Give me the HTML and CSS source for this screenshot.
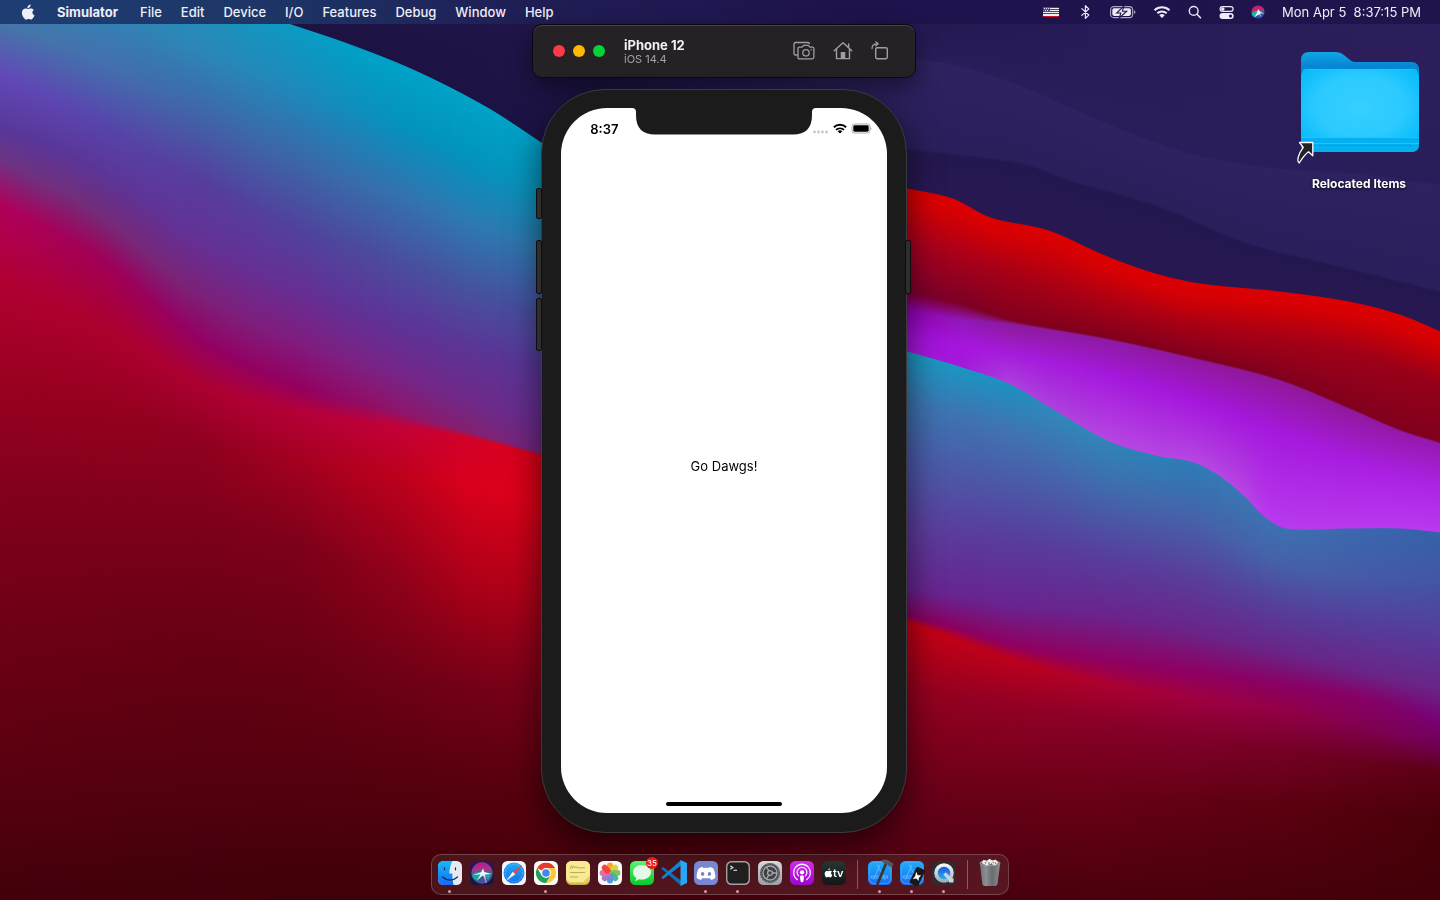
FILE: index.html
```html
<!DOCTYPE html>
<html lang="en">
<head>
<meta charset="utf-8">
<title>Simulator – iPhone 12</title>
<link rel="stylesheet" href="styles.css">
</head>
<body>
<canvas class="wallpaper" id="wallpaper" width="1440" height="900" aria-hidden="true"></canvas>

<header class="menubar">
  <nav class="menus" aria-label="Application menu">
    <button class="menu apple" aria-label="Apple menu">
      <svg width="14" height="17" viewBox="0 0 14 17"><path fill="#eef0f5" d="M9.6 0.4c.1 1-.3 2-.9 2.700-.6.8-1.500 1.300-2.300 1.200-.1-1 .3-1.900.9-2.600C7.900.9 8.900.4 9.600.4zM12.900 6.100c-.9.5-1.500 1.300-1.500 2.500 0 1.400.9 2.300 2.100 2.700-.3 1-.8 1.900-1.400 2.700-.6.8-1.200 1.600-2.200 1.600-.9 0-1.200-.5-2.300-.5s-1.500.5-2.300.6c-1 0-1.700-.9-2.300-1.700C1.300 12 .4 9.400 1.200 7c.5-1.600 1.900-2.600 3.300-2.600 1 0 1.900.6 2.600.6.600 0 1.700-.7 2.900-.6 1.200 0 2.200.6 2.900 1.700z"/></svg>
    </button>
    <button class="menu app-name">Simulator</button>
    <button class="menu">File</button>
    <button class="menu">Edit</button>
    <button class="menu">Device</button>
    <button class="menu">I/O</button>
    <button class="menu">Features</button>
    <button class="menu">Debug</button>
    <button class="menu">Window</button>
    <button class="menu">Help</button>
  </nav>
  <div class="status">
    <button class="menu" aria-label="Input source: U.S.">
      <svg width="18" height="16" viewBox="0 0 18 16"><path fill="#f4f1f5" d="M0 3h16v10H0z"/><path fill="#cf1024" d="M0 3h16v1H0zM0 5h16v1H0zM0 7h16v1H0zM0 9h16v1H0zM0 11h16v1H0zM0 12h16v1H0z"/><path fill="#f4f1f5" d="M0 11h16v1H0z"/><path fill="#4a4fa2" d="M0 3h7v5H0z"/><path fill="#dfe2f6" d="M1 4h1v1H1zM3 4h1v1H3zM5 4h1v1H5zM2 6h1v1H2zM4 6h1v1H4z"/></svg>
    </button>
    <button class="menu" aria-label="Bluetooth">
      <svg width="15" height="16" viewBox="0 0 15 16"><path fill="none" stroke="#e9e7f2" stroke-width="1.200" stroke-linejoin="round" stroke-linecap="round" d="M3.800 4.600l7 6.400-3.400 3.400V1.600l3.400 3.400-7 6.400"/></svg>
    </button>
    <button class="menu" aria-label="Battery, charging">
      <svg width="26" height="16" viewBox="0 0 26 16"><rect x=".6" y="2.600" width="22" height="11" rx="3.200" fill="none" stroke="#aaa5c4" stroke-width="1.100"/><rect x="2.300" y="4.300" width="18.600" height="7.600" rx="1.800" fill="#eceaf4"/><path fill="#aaa5c4" d="M23.900 6.200c1 .3 1.500 1 1.500 1.900s-.5 1.600-1.500 1.900z"/><path fill="#eceaf4" stroke="#22154f" stroke-width="1.100" d="M13.800 2.200L6.700 9h4.100l-1.500 5L16.700 7.200h-4.200z"/></svg>
    </button>
    <button class="menu" aria-label="Wi-Fi">
      <svg width="18" height="16" viewBox="0 0 18 16"><g fill="none" stroke="#eceaf4" stroke-width="2"><path d="M1.500 6.200a11 11 0 0 1 15 0M4.300 9.200a7 7 0 0 1 9.400 0"/></g><path fill="#eceaf4" d="M9 14l-2.700-2.700a4 4 0 0 1 5.400 0z"/></svg>
    </button>
    <button class="menu" aria-label="Search">
      <svg width="14" height="16" viewBox="0 0 14 16"><circle cx="5.700" cy="6.900" r="4.400" fill="none" stroke="#e9e7f2" stroke-width="1.400"/><path stroke="#e9e7f2" stroke-width="1.600" stroke-linecap="round" d="M9 10.300l3.500 3.500"/></svg>
    </button>
    <button class="menu" aria-label="Control Center">
      <svg width="15" height="16" viewBox="0 0 15 16"><rect x="1.100" y="2.600" width="13" height="4.800" rx="2.400" fill="none" stroke="#eceaf4" stroke-width="1.200"/><circle cx="3.800" cy="5" r="1.800" fill="#eceaf4"/><rect x=".5" y="9" width="14.200" height="6" rx="3" fill="#eceaf4"/><circle cx="11.500" cy="12" r="1.600" fill="#22154f"/></svg>
    </button>
    <button class="menu" aria-label="Siri">
      <svg width="14" height="16" viewBox="0 0 14 16"><defs><linearGradient id="siri-bar" x1="0" y1="0" x2=".2" y2="1"><stop offset="0" stop-color="#a2206e"/><stop offset=".4" stop-color="#d0246e"/><stop offset=".6" stop-color="#2b6c9c"/><stop offset="1" stop-color="#3244a8"/></linearGradient></defs><circle cx="7" cy="8" r="6.600" fill="url(#siri-bar)"/><path fill="#18b9a9" d="M.6 9.500C2.500 7.500 4.500 7 6.500 7L4 13.500C2 12.700.8 11.300.6 9.500z"/><path fill="#f4f6fb" d="M7 5.200l3 3 3.200 1-4.200.3 1 4-1.800-3.200-4.500 2.600L6 8.600z"/></svg>
    </button>
    <time class="clock">Mon Apr 5&nbsp; 8:37:15 PM</time>
  </div>
</header>

<a class="desktop-item" href="#">
  <svg width="128" height="124" viewBox="0 0 128 124">
    <defs>
      <linearGradient id="fold-back" x1="0" y1="0" x2="0" y2="1"><stop offset="0" stop-color="#12a6e4"/><stop offset=".2" stop-color="#0687d4"/></linearGradient>
      <radialGradient id="fold-front" cx=".5" cy=".45" r=".62"><stop offset="0" stop-color="#36cfff"/><stop offset=".6" stop-color="#2bcaff"/><stop offset="1" stop-color="#08bcfa"/></radialGradient>
    </defs>
    <path fill="url(#fold-back)" d="M6 14q0-8 8-8h26c6 0 9 3 12 5.500C55 14 57 16 61 16h55q8 0 8 8v50H6z"/>
    <path fill="url(#fold-front)" d="M6 31q0-8 8-8h102q8 0 8 8v67q0 8-8 8H14q-8 0-8-8z"/>
    <path fill="#04b0f0" d="M6 91h118v7q0 8-8 8H14q-8 0-8-8z"/>
    <path stroke="#2cc0f6" stroke-width="1" fill="none" d="M6 91.500h118M6 97.500h118M8 24.500q2-1 6-1h102q4 0 6 1"/>
    <path stroke="#049fe0" stroke-width="1" d="M6 99.500h118"/>
    <path fill="#222326" stroke="#fff" stroke-width="1.300" stroke-linejoin="round" d="M4.500 96.500h13.300v13.300l-4.300-4c-4 3-6 6-9.300 11.200-1.400-1-1.700-3-.9-6 .8-3.500 2.500-6.500 5-9.700z"/>
  </svg>
  <span class="desktop-label">Relocated Items</span>
</a>

<main class="stage">
  <section class="sim-bar" aria-label="Simulator window">
    <div class="lights">
      <button class="light close" aria-label="Close"></button>
      <button class="light minimise" aria-label="Minimise"></button>
      <button class="light zoom" aria-label="Zoom"></button>
    </div>
    <div class="sim-title">
      <h1 class="sim-name">iPhone 12</h1>
      <p class="sim-os">iOS 14.4</p>
    </div>
    <div class="sim-tools">
      <button class="tool" aria-label="Screenshot">
        <svg width="22" height="20" viewBox="0 0 22 20"><g fill="none" stroke="#a19da0" stroke-width="1.300" stroke-linejoin="round"><path d="M4.500 14H2.600Q1 14 1 12.400V3.100Q1 1.500 2.600 1.500h12.300q1.600 0 1.600 1.600"/><path d="M6.500 6.200h2.600l1.500-1.900h4.800l1.500 1.900h2.500q1.500 0 1.500 1.500v8.600q0 1.500-1.500 1.500H6.500Q5 17.800 5 16.300V7.700q0-1.500 1.500-1.500z"/><circle cx="13" cy="11.800" r="3.200"/></g><circle cx="18.300" cy="8.700" r=".8" fill="#a19da0"/></svg>
      </button>
      <button class="tool" aria-label="Home">
        <svg width="20" height="20" viewBox="0 0 20 20"><path fill="none" stroke="#a19da0" stroke-width="1.400" stroke-linejoin="round" stroke-linecap="round" d="M1.200 9.700L10 1.800l8.800 7.900M3.500 8v9.600h13V8M15.600 6V3"/><path fill="#a19da0" d="M7.700 11h4.600v6.600H7.700z"/></svg>
      </button>
      <button class="tool" aria-label="Rotate">
        <svg width="18" height="20" viewBox="0 0 18 20"><rect x="4.700" y="6.700" width="11.600" height="11" rx="1.400" fill="none" stroke="#a19da0" stroke-width="1.400"/><path fill="none" stroke="#a19da0" stroke-width="1.300" stroke-linecap="round" stroke-linejoin="round" d="M1 7.500c0-3 1.600-4.700 5.400-4.700M4.800.9l2.400 1.900-2.400 2"/></svg>
      </button>
    </div>
  </section>

  <section class="phone" aria-label="iPhone 12">
    <span class="key mute"></span>
    <span class="key vol-up"></span>
    <span class="key vol-down"></span>
    <span class="key power"></span>
    <div class="screen">
      <svg class="notch" width="184" height="27" viewBox="0 0 184 27" aria-hidden="true"><path fill="#1b1b1b" d="M0 0h184q-4 0-4 4v3q0 19.500-19 19.500H23Q4 26.500 4 7V4q0-4-4-4z"/></svg>
      <div class="ios-status">
        <time class="ios-time">8:37</time>
        <svg width="60" height="12" viewBox="0 0 60 12" aria-hidden="true"><g fill="#c6c6c8"><circle cx="3.500" cy="9" r="1.400"/><circle cx="7.500" cy="9" r="1.400"/><circle cx="11.500" cy="9" r="1.400"/><circle cx="15.500" cy="9" r="1.400"/></g><g fill="none" stroke="#000" stroke-width="1.900"><path d="M22.800 4.300a9 9 0 0 1 12.400 0M25 6.900a6 6 0 0 1 8 0"/></g><path d="M29 10.600l-2.300-2.300a3.400 3.400 0 0 1 4.600 0z"/><rect x="41" y="1" width="18" height="9" rx="2.600" fill="none" stroke="#aaa"/><rect x="42.300" y="2.300" width="15.400" height="6.400" rx="1.400"/><path fill="#aaa" d="M59.500 4q1 .5 1 1.500t-1 1.500z"/></svg>
      </div>
      <p class="greeting">Go Dawgs!</p>
      <div class="home-bar"></div>
    </div>
  </section>
</main>

<footer class="dock-row">
  <nav class="dock" aria-label="Dock">
    <button class="app running" aria-label="Finder"><svg class="icon" viewBox="0 0 28 28"><defs><linearGradient id="fi" x1="0" y1="0" x2="0" y2="1"><stop offset="0" stop-color="#10bcfc"/><stop offset="1" stop-color="#1c68f4"/></linearGradient></defs><rect x="2" y="2" width="24" height="24" rx="5.500" fill="#e6e9f0"/><path fill="url(#fi)" d="M7.500 2h9c-2 3.500-3 8-3.200 12.500h3c0 4 .3 8 1.400 11.500H7.500A5.500 5.500 0 0 1 2 20.500v-13A5.500 5.500 0 0 1 7.500 2z"/><path fill="none" stroke="#1c2a48" stroke-width="1.200" stroke-linecap="round" d="M8.500 8.800v2M19.500 8.800v2M6.500 18c4.500 4.200 10.500 4.200 15 0"/></svg></button>
    <button class="app" aria-label="Siri"><svg class="icon" viewBox="0 0 28 28"><defs><linearGradient id="si" x1="0" y1="0" x2="0" y2="1"><stop offset="0" stop-color="#3c0f55"/><stop offset="1" stop-color="#0c1c3e"/></linearGradient><linearGradient id="so" x1=".4" y1="0" x2=".5" y2="1"><stop offset="0" stop-color="#c4148c"/><stop offset=".35" stop-color="#a43a8c"/><stop offset=".6" stop-color="#246a86"/><stop offset="1" stop-color="#4a4aa8"/></linearGradient></defs><rect x="2" y="2" width="24" height="24" rx="5.500" fill="url(#si)"/><circle cx="14" cy="14" r="10.400" fill="url(#so)" stroke="#5f5f94" stroke-width=".6"/><path fill="#16a4a5" d="M4 16c3-3 6-3 10-3l-4.500 9C6.500 21 4.500 19 4 16z"/><path fill="#2aa0b4" d="M15 14l8 2-3 5z"/><path fill="#e8fbff" d="M15 9.500l1.300 3.500L24 15l-7.200.4 1.700 8-3.500-7.200-6 5.300 3.600-6.300L5 16l8-2.800z"/><path fill="#f06ab0" d="M15.500 16l3.500 7.500-1.500.5z"/></svg></button>
    <button class="app" aria-label="Safari"><svg class="icon" viewBox="0 0 28 28"><defs><linearGradient id="sf" x1="0" y1="0" x2="0" y2="1"><stop offset="0" stop-color="#1fa8f6"/><stop offset="1" stop-color="#1a72ec"/></linearGradient></defs><rect x="2" y="2" width="24" height="24" rx="5.500" fill="#f5f6f8"/><circle cx="14" cy="14" r="10.500" fill="url(#sf)"/><circle cx="14" cy="14" r="8.800" fill="none" stroke="#bfe2fb" stroke-width=".7" stroke-dasharray=".5 1"/><path fill="#f24338" d="M22 6l-9.200 6.700 2.500 2.500z"/><path fill="#f6f6f8" d="M6 22l6.800-9.300 2.500 2.500z"/></svg></button>
    <button class="app running" aria-label="Chrome"><svg class="icon" viewBox="0 0 28 28"><rect x="2" y="2" width="24" height="24" rx="5.500" fill="#fbfbfb"/><path fill="#e33b2e" d="M14 14L5.200 9A10 10 0 0 1 22.800 9z"/><path fill="#e33b2e" d="M14 4a10 10 0 0 1 8.700 5.100H14z"/><path fill="#fcc934" d="M22.700 9.100A10 10 0 0 1 14 24l4.300-7.500L14 9.100z"/><path fill="#1fa15a" d="M5.300 9A10 10 0 0 0 14 24l4.300-7.500H9.700z"/><circle cx="14" cy="14" r="4.900" fill="#fff"/><circle cx="14" cy="14" r="3.800" fill="#4684f0"/></svg></button>
    <button class="app" aria-label="Stickies"><svg class="icon" viewBox="0 0 28 28"><rect x="2" y="3" width="24" height="23" rx="5.500" fill="#c9ad46"/><rect x="2" y="2" width="24" height="22.500" rx="5.500" fill="#e3cf66"/><path fill="#f7ea91" d="M7.500 2h13A5.500 5.500 0 0 1 26 7.500v9l-7 6.500H7.500A5.500 5.500 0 0 1 2 17.500v-10A5.500 5.500 0 0 1 7.500 2z"/><path fill="none" stroke="#b5a555" stroke-width=".9" d="M6 10c1-5 2.500-4 2.300-.5 1-3 2-3 2.700-.5.500-2 1.500-2 2 .2 1-1.500 2 .3 3-.4h5M6 13.500h15M6 18h8"/></svg></button>
    <button class="app" aria-label="Photos"><svg class="icon" viewBox="0 0 28 28"><rect x="2" y="2" width="24" height="24" rx="5.500" fill="#fafafa"/><g opacity=".9"><rect x="11" y="3.600" width="6" height="10" rx="3" fill="#f79a1e"/><rect x="11" y="3.600" width="6" height="10" rx="3" fill="#d3d32c" transform="rotate(45 14 14)"/><rect x="11" y="3.600" width="6" height="10" rx="3" fill="#71bf47" transform="rotate(90 14 14)"/><rect x="11" y="3.600" width="6" height="10" rx="3" fill="#35b08d" transform="rotate(135 14 14)"/><rect x="11" y="3.600" width="6" height="10" rx="3" fill="#4b87dc" transform="rotate(180 14 14)"/><rect x="11" y="3.600" width="6" height="10" rx="3" fill="#9a6cc4" transform="rotate(225 14 14)"/><rect x="11" y="3.600" width="6" height="10" rx="3" fill="#e0609c" transform="rotate(270 14 14)"/><rect x="11" y="3.600" width="6" height="10" rx="3" fill="#ee3328" transform="rotate(315 14 14)"/></g></svg></button>
    <button class="app" aria-label="Messages, 35 unread"><svg class="icon" viewBox="0 0 28 28"><defs><linearGradient id="me" x1="0" y1="0" x2="0" y2="1"><stop offset="0" stop-color="#5bf675"/><stop offset="1" stop-color="#08c92b"/></linearGradient></defs><rect x="2" y="2" width="24" height="24" rx="5.500" fill="url(#me)"/><path fill="#e6f8e8" d="M14 6c5 0 9 3.200 9 7.300s-4 7.300-9 7.300c-1 0-2-.1-2.900-.4-1 .9-2.600 1.500-4.300 1.500.9-.7 1.500-1.700 1.500-2.800C6.300 17.600 5 15.600 5 13.300 5 9.200 9 6 14 6z"/></svg><span class="badge">35</span></button>
    <button class="app" aria-label="Visual Studio Code"><svg class="icon" viewBox="0 0 28 28"><path fill="#0a6fb8" d="M1.200 9.500l2-1.600L21 21.500v5.300z"/><path fill="#1585d0" d="M1.200 18.500l2 1.600L21 6.500V1.200z"/><path fill="#2aa6f2" d="M20.500 1L27 4v20l-6.500 3z"/></svg></button>
    <button class="app running" aria-label="Discord"><svg class="icon" viewBox="0 0 28 28"><rect x="2" y="2" width="24" height="24" rx="5.500" fill="#7887d2"/><path fill="#fff" d="M10.700 8l.6 1a14 14 0 0 1 5.400 0l.6-1c1.700.3 3 .8 4 1.500 1.500 2.800 2.200 6 2 9.500-1.400 1-2.800 1.700-4.300 2l-1-1.700-8 0-1 1.700c-1.500-.3-2.900-1-4.300-2-.2-3.500.5-6.700 2-9.500 1-.7 2.300-1.200 4-1.500z"/><ellipse cx="10.600" cy="14.900" rx="1.700" ry="1.900" fill="#7080cc"/><ellipse cx="17.400" cy="14.900" rx="1.700" ry="1.900" fill="#7080cc"/></svg></button>
    <button class="app running" aria-label="Terminal"><svg class="icon" viewBox="0 0 28 28"><rect x="2" y="2" width="24" height="24" rx="5.500" fill="#a2a0a0"/><rect x="3.400" y="3.400" width="21.200" height="21.200" rx="4.300" fill="#1f1f20"/><path fill="none" stroke="#f5f5f5" stroke-width="1.100" d="M6.300 7l2.500 1.600-2.500 1.600M9.500 11.300h3.600"/></svg></button>
    <button class="app" aria-label="System Preferences"><svg class="icon" viewBox="0 0 28 28"><defs><linearGradient id="sp" x1="0" y1="0" x2="0" y2="1"><stop offset="0" stop-color="#d7dadd"/><stop offset="1" stop-color="#9b9fa4"/></linearGradient></defs><rect x="2" y="2" width="24" height="24" rx="5.500" fill="url(#sp)"/><circle cx="14" cy="14" r="10" fill="#3f4145"/><circle cx="14" cy="14" r="9" fill="none" stroke="#a2a5a8" stroke-width="1" stroke-dasharray="1 .8"/><circle cx="14" cy="14" r="7" fill="none" stroke="#a8abae" stroke-width="1.300"/><circle cx="14" cy="14" r="2.400" fill="none" stroke="#a8abae" stroke-width="1.300"/><path stroke="#a8abae" stroke-width="1.300" d="M16.400 14H21M12.800 11.900L10.500 8M12.800 16.100L10.500 20"/></svg></button>
    <button class="app" aria-label="Podcasts"><svg class="icon" viewBox="0 0 28 28"><defs><linearGradient id="po" x1="0" y1="0" x2="0" y2="1"><stop offset="0" stop-color="#d22cee"/><stop offset="1" stop-color="#9a08cc"/></linearGradient></defs><rect x="2" y="2" width="24" height="24" rx="5.500" fill="url(#po)"/><g fill="none" stroke="#f7ebfb" stroke-width="1.300" stroke-linecap="round"><path d="M9.300 20.600a8.400 8.400 0 1 1 9.400 0"/><path d="M10.500 16.800a4.900 4.900 0 1 1 7 0"/></g><circle cx="14" cy="13.300" r="2.100" fill="#fff"/><path fill="#fff" d="M12 18q0-1.700 2-1.700t2 1.700l-.6 4.200q-.2 1-1.400 1t-1.400-1z"/></svg></button>
    <button class="app" aria-label="Apple TV"><svg class="icon" viewBox="0 0 28 28"><defs><linearGradient id="tv" x1="0" y1="0" x2="0" y2="1"><stop offset="0" stop-color="#263634"/><stop offset="1" stop-color="#151516"/></linearGradient></defs><rect x="2" y="2" width="24" height="24" rx="5.500" fill="url(#tv)"/><path fill="#fff" d="M10 9.200c0 1-.8 2-1.800 2 0-1 .8-1.900 1.800-2zM12 12.500c-1.400 1-1.200 2.800.3 3.500-.4 1.300-1.200 2.400-2 2.400-.7 0-.9-.4-1.700-.4s-1 .4-1.700.4c-1.600 0-2.800-3.400-1.900-5.200.8-1.600 2.400-1.500 3.500-.9 1.300-.6 2.500-.7 3.500.2z"/><text class="tv-word" x="13" y="18">tv</text></svg></button>
    <span class="divider"></span>
    <button class="app running" aria-label="Xcode"><svg class="icon" viewBox="0 0 28 28"><defs><linearGradient id="xc" x1="0" y1="0" x2="0" y2="1"><stop offset="0" stop-color="#1cb0fa"/><stop offset="1" stop-color="#1c6cf0"/></linearGradient></defs><rect x="2" y="2" width="24" height="24" rx="5.500" fill="url(#xc)"/><rect x="3.600" y="3.600" width="20.800" height="20.800" rx="4.300" fill="none" stroke="#4aa8fb" stroke-width=".7"/><path fill="none" stroke="#6cc0fd" stroke-width=".8" d="M14 5.500l-6.500 15M11 5.500l8 15M5.500 17h16v2h-16z"/><path stroke="#35373b" stroke-width="2.800" stroke-linecap="round" d="M20 4.500L11.500 25"/><path fill="#54575c" d="M15 1.500c3-2 7-1 9 1l3.500 2.300-1.500 3.700-3-1.200-1.500-1.800-4.500-1.800z"/></svg></button>
    <button class="app running" aria-label="Simulator"><svg class="icon" viewBox="0 0 28 28"><rect x="2" y="2" width="24" height="24" rx="5.500" fill="url(#xc)"/><rect x="3.600" y="3.600" width="20.800" height="20.800" rx="4.300" fill="none" stroke="#4aa8fb" stroke-width=".7"/><path fill="none" stroke="#6cc0fd" stroke-width=".8" d="M14 5.500l-6.500 15M11 5.500l8 15M5.500 17h16v2h-16z"/><g transform="rotate(25 19 17.500)"><rect x="14.500" y="8.500" width="9.600" height="18" rx="1.600" fill="#17181a"/><path fill="#fff" d="M16.200 13.500l3 2.600 3-1.600-1 3.500 1.200 3-3.200-1.500-3 2 1-3.600z"/></g></svg></button>
    <button class="app running" aria-label="QuickTime Player"><svg class="icon" viewBox="0 0 28 28"><defs><linearGradient id="qr" x1="0" y1="0" x2="0" y2="1"><stop offset="0" stop-color="#f3f5f7"/><stop offset="1" stop-color="#a9adb3"/></linearGradient><linearGradient id="qc" x1="0" y1="0" x2="0" y2="1"><stop offset="0" stop-color="#2846d6"/><stop offset="1" stop-color="#1bc3f4"/></linearGradient></defs><rect x="2" y="2" width="24" height="24" rx="5.500" fill="#2c2d30"/><circle cx="14" cy="14" r="8" fill="url(#qc)" stroke="url(#qr)" stroke-width="3.600"/><path stroke="#cfd3d8" stroke-width="3.600" d="M14.500 14.500l6 6"/><path fill="#cfd3d8" d="M19 20l4.500-1v4.500H19z"/></svg></button>
    <span class="divider"></span>
    <button class="app" aria-label="Trash"><svg class="icon" viewBox="0 0 28 28"><defs><linearGradient id="tr" x1="0" y1="0" x2="1" y2="0"><stop offset="0" stop-color="#6d7072"/><stop offset=".3" stop-color="#8d9092"/><stop offset=".6" stop-color="#6a6d6f"/><stop offset="1" stop-color="#8a8d8f"/></linearGradient></defs><path fill="url(#tr)" d="M3.700 3.500h20.600L21.500 25q-.3 2-2.400 2H8.800q-2.100 0-2.400-2z"/><ellipse cx="14" cy="4" rx="10" ry="2.600" fill="#57595b" stroke="#a8aaac" stroke-width=".8"/><path fill="#ececec" d="M5.500 4l2-3.200 3 1.300 3-2.300 3 2 3-1.300 3 3.500L19 6.300 14.500 5l-4 1.500z"/><path fill="#c6543e" d="M8.500 3l2 .5-1 1.500zM16.500 2.500l2 1-1.500 1z"/><path fill="#3a5a9a" d="M12.500 3l1.500 1-1.500 1.500zM19.500 3l1 1.500-1.500.5z"/><path fill="#444" d="M10.500 1l1 1-1 .8zM15 4l1 .7-1 1z"/></svg></button>
  </nav>
</footer>
<script src="wallpaper.js"></script>
</body>
</html>
```
FILE: styles.css
```css
* { box-sizing: border-box; }

body {
  margin: 0;
  min-height: 100vh;
  display: flex;
  flex-direction: column;
  position: relative;
  overflow: hidden;
  background: #1c1140;
  color: #fff;
  font-family: Inter, "Liberation Sans", sans-serif;
  font-size: 13px;
}

button {
  margin: 0;
  padding: 0;
  border: 0;
  background: none;
  color: inherit;
  font: inherit;
}

svg { display: block; overflow: visible; }

.wallpaper {
  position: absolute;
  inset: 0;
  z-index: -1;
  width: 100%;
  height: 100%;
  object-fit: cover;
}

/* Menu bar */
.menubar {
  display: flex;
  justify-content: space-between;
  align-items: center;
  height: 24px;
  padding: 0 19px 0 21px;
  background: linear-gradient(90deg, #1e3d73 0%, #1d3667 18%, #1f1e55 36%, #20124c 60%, #21144c 100%);
  color: #efeef5;
}

.menus { display: flex; align-items: center; gap: 19px; }
.status { display: flex; align-items: center; gap: 17px; }
.menu { font-weight: 500; line-height: 24px; white-space: nowrap; }
.apple { margin-right: 3px; }
.app-name { margin-right: 3px; font-weight: 700; }
.clock { line-height: 24px; white-space: nowrap; }

/* Desktop */
.desktop-item {
  position: absolute;
  top: 46px;
  right: 17px;
  display: flex;
  flex-direction: column;
  align-items: center;
  gap: 6px;
  color: #fff;
  text-decoration: none;
}

.desktop-label {
  font-size: 12px;
  font-weight: 700;
  line-height: 16px;
  text-shadow: 0 1px 3px rgba(0, 0, 0, 0.8);
}

/* Simulator */
.stage {
  flex: 1;
  min-height: 0;
  display: flex;
  flex-direction: column;
  align-items: center;
  gap: 11px;
  padding: 0 0 21px 8px;
}

.sim-bar {
  display: flex;
  align-items: center;
  width: 384px;
  height: 54px;
  padding: 0 26px 0 20px;
  border: 1px solid #0b080f;
  border-radius: 10px;
  background: #262124;
  box-shadow: inset 0 1px 0 #48434a, 0 10px 24px rgba(0, 0, 0, 0.45);
}

.lights { display: flex; gap: 8px; }
.light { width: 12px; height: 12px; border-radius: 50%; }
.close { background: #fc3b47; }
.minimise { background: #fdb803; }
.zoom { background: #02d33a; }

.sim-title { flex: 1; padding-left: 19px; }
.sim-name { margin: 0; font-size: 13px; font-weight: 700; line-height: 16px; color: #f3f1f3; }
.sim-os { margin: 0; font-size: 11px; line-height: 13px; color: #a5a1a4; }
.sim-tools { display: flex; align-items: center; gap: 18px; }

.phone {
  position: relative;
  flex: 1;
  min-height: 0;
  display: flex;
  aspect-ratio: 366 / 745;
  padding: 18px 19px 19px;
  border: 1px solid #3b3b3d;
  border-radius: 64px;
  background: #1b1b1b;
  box-shadow: 0 12px 34px rgba(0, 0, 0, 0.6);
}

.key {
  position: absolute;
  width: 6px;
  border: 1px solid #0c0c0c;
  border-radius: 2px;
  background: #2e2e2e;
}
.mute { left: -6px; top: 98px; height: 31px; }
.vol-up { left: -6px; top: 150px; height: 54px; }
.vol-down { left: -6px; top: 208px; height: 53px; }
.power { right: -5px; top: 150px; height: 54px; }

.screen {
  position: relative;
  flex: 1;
  display: flex;
  flex-direction: column;
  align-items: center;
  border-radius: 46px;
  background: #fff;
  color: #000;
}

.notch { position: absolute; top: 0; left: calc(50% - 92px); }

.ios-status {
  display: flex;
  justify-content: space-between;
  align-items: center;
  align-self: stretch;
  height: 41px;
  padding: 0 16px 0 29px;
}
.ios-time { font-size: 13px; font-weight: 600; }

.greeting {
  flex: 1;
  display: flex;
  align-items: center;
  margin: 0;
  padding-bottom: 20px;
  font-size: 13px;
}

.home-bar {
  width: 116px;
  height: 4px;
  margin-bottom: 7px;
  border-radius: 2px;
  background: #000;
}

/* Dock */
.dock-row { display: flex; justify-content: center; padding-bottom: 5px; }

.dock {
  display: flex;
  height: 41px;
  padding: 0 2px;
  border: 1px solid rgba(255, 255, 255, 0.2);
  border-radius: 10px;
  background: linear-gradient(90deg, #4b141b, #571520);
}

.app {
  position: relative;
  width: 32px;
  padding: 4px 2px 0;
  display: flex;
  justify-content: center;
  align-items: flex-start;
}
.icon { width: 28px; height: 28px; }

.running::after {
  content: "";
  position: absolute;
  left: 14px;
  bottom: 1px;
  width: 3px;
  height: 3px;
  border-radius: 50%;
  background: #dd9aa2;
}

.badge {
  position: absolute;
  top: 2px;
  right: 0;
  width: 12px;
  height: 12px;
  border-radius: 50%;
  background: #f01a1c;
  color: #fff;
  font-size: 8px;
  line-height: 12px;
  text-align: center;
}

.tv-word { fill: #fff; font-family: Inter, sans-serif; font-size: 11px; font-weight: 600; }

.divider {
  width: 1px;
  height: 29px;
  margin: 5px 6px 0 7px;
  background: rgba(255, 255, 255, 0.3);
}
```
FILE: wallpaper.js
```js
// Paints the wallpaper as rows of colour running from left to right.
// Each row is a list of [x, y, colour] points; columns blend from row to row.
const repeat = (points, colour) => points.map(([x, y]) => [x, y, colour]);
const shift = (points, dy) => points.map(([x, y, c]) => [x, y + dy, c]);

const leftEdge = [[0, -60, '#3a8ab4'], [100, -34, '#2a8cb8'], [200, -6, '#1c94be'], [288, 24, '#0c9ac2'], [350, 45, '#00a0c6'], [417, 72, '#00a2c8'], [487, 108, '#00a2c8'], [541, 143, '#00a0c6']];
const left = [
  [[0, -100, '#1c1140'], [541, 0, '#20164a']],
  repeat(shift(leftEdge, -1), '#1c1244'),
  leftEdge,
  [[0, -20, '#3a80ae'], [100, 10, '#3283b4'], [200, 50, '#2c86b6'], [300, 90, '#1c8abb'], [400, 125, '#0492be'], [470, 155, '#0094be'], [541, 195, '#0a94bc']],
  [[0, 20, '#4478a8'], [100, 62, '#4470ae'], [200, 115, '#4064a8'], [300, 165, '#3d64a6'], [400, 195, '#3372ae'], [470, 222, '#2c7ab2'], [541, 250, '#2e74ac']],
  [[0, 72, '#6349b9'], [100, 122, '#5645ac'], [200, 182, '#573c9c'], [300, 230, '#50429c'], [400, 262, '#4a4e9e'], [470, 290, '#46529e'], [541, 315, '#464c9c']],
  [[0, 125, '#57379a'], [100, 172, '#5b3596'], [200, 238, '#633296'], [300, 288, '#643094'], [400, 322, '#5c3498'], [470, 346, '#5b3596'], [541, 368, '#573696']],
  [[0, 158, '#6c3484'], [100, 215, '#742c78'], [200, 296, '#7c2078'], [300, 342, '#801c80'], [400, 378, '#782486'], [470, 405, '#702886'], [541, 425, '#682c8c']],
  [[0, 205, '#b0005a'], [100, 258, '#a00058'], [200, 340, '#940062'], [300, 388, '#94005e'], [400, 413, '#901468'], [470, 433, '#84206e'], [541, 453, '#742680']],
  [[0, 285, '#b00030'], [100, 325, '#ad002e'], [200, 385, '#ac0030'], [300, 412, '#b40038'], [400, 427, '#c40038'], [470, 438, '#d20028'], [541, 456, '#dc0018']],
  [[0, 370, '#9c0022'], [100, 400, '#980020'], [200, 440, '#900020'], [300, 462, '#a40020'], [400, 475, '#be001c'], [470, 485, '#da001c'], [541, 500, '#de0018']],
  [[0, 470, '#86001e'], [200, 520, '#7e001a'], [300, 545, '#7e001a'], [400, 570, '#94001a'], [470, 580, '#ae0018'], [541, 590, '#b40018']],
  [[0, 640, '#6c0014'], [200, 650, '#660012'], [300, 665, '#660012'], [400, 680, '#6e0016'], [541, 690, '#7a0018']],
  [[0, 770, '#5a0010'], [200, 770, '#560010'], [400, 780, '#56000e'], [541, 790, '#58000e']],
  [[0, 900, '#42000a'], [300, 900, '#3e0008'], [541, 900, '#3e0008']]
];

const wave1 = [[907, 56], [960, 66], [1020, 85], [1100, 120], [1187, 152], [1273, 167], [1360, 173], [1440, 184]];
const wave2 = [[907, 148], [1020, 162], [1072, 180], [1158, 205], [1244, 241], [1347, 267], [1440, 290]];
const red = [[907, 189], [952, 199], [990, 218], [1048, 231], [1107, 257], [1155, 274], [1200, 284], [1279, 292], [1348, 302], [1399, 315], [1440, 332]];
const blue = [[907, 352, '#1a98c0'], [962, 368, '#1a96c2'], [1010, 385, '#1c90c0'], [1048, 407, '#3088bc'], [1107, 441, '#3084b8'], [1155, 456, '#2c80b8'], [1193, 463, '#2c7cb6'], [1220, 477, '#347ab4'], [1244, 497, '#3876b2'], [1265, 518, '#3c72b2'], [1286, 529, '#3c70b0'], [1348, 529, '#3c68ae'], [1399, 529, '#3864ac'], [1440, 533, '#3462a8']];
const right = [
  [[907, 0, '#20154a'], [1100, 0, '#281b56'], [1440, 0, '#2c1f5c']],
  repeat(wave1, '#291d5a'),
  repeat(shift(wave1, 2), '#2e2260'),
  repeat(wave2, '#2b1e5b'),
  repeat(shift(wave2, 3), '#24174f'),
  repeat(shift(red, -1), '#281852'),
  repeat(red, '#dd0000'),
  repeat(shift(red, 14), '#d40004'),
  [[907, 245, '#a40020'], [1010, 272, '#a80016'], [1107, 302, '#ac0014'], [1200, 326, '#a80014'], [1348, 352, '#a00018'], [1440, 385, '#940018']],
  [[907, 292, '#7c002e'], [962, 304, '#7c0026'], [1010, 320, '#80001e'], [1107, 338, '#80001e'], [1193, 357, '#80001e'], [1279, 379, '#80001e'], [1348, 407, '#80001e'], [1399, 429, '#80001e'], [1440, 442, '#80001e']],
  [[907, 310, '#9400b4'], [962, 320, '#9018b8'], [1010, 324, '#8c1a9a'], [1107, 340, '#8e1aa4'], [1193, 359, '#90189c'], [1279, 381, '#901898'], [1348, 409, '#90189c'], [1399, 431, '#9418a8'], [1440, 444, '#9418b0']],
  [[907, 335, '#a010d8'], [962, 345, '#a614dc'], [1010, 354, '#a61cdc'], [1107, 375, '#a418dc'], [1193, 400, '#a416dc'], [1279, 432, '#a418dc'], [1348, 460, '#a81ce0'], [1440, 488, '#ac24e6']],
  blue.map(([x, y], i) => [x, y - 1, i < 2 ? '#a418d8' : i < 4 ? '#ac40dc' : i < 9 ? '#b646e2' : '#b83aee']),
  blue,
  [[907, 405, '#3c72b0'], [1010, 430, '#4074b2'], [1107, 482, '#3e6eae'], [1193, 515, '#4464aa'], [1286, 565, '#4660a8'], [1440, 580, '#4256a6']],
  [[907, 530, '#5c3c9c'], [1010, 540, '#583c9c'], [1107, 560, '#583c9c'], [1193, 580, '#5a3c9a'], [1286, 610, '#553e9a'], [1440, 640, '#563a9a']],
  [[907, 588, '#66248e'], [1010, 605, '#682490'], [1107, 615, '#6a248c'], [1193, 632, '#6a2488'], [1286, 655, '#6a2486'], [1440, 690, '#6a2486']],
  [[907, 616, '#880060'], [962, 630, '#8c0060'], [1010, 645, '#900060'], [1107, 662, '#900060'], [1193, 672, '#8e0062'], [1286, 685, '#8a0064'], [1370, 700, '#860066'], [1440, 722, '#780074']],
  [[907, 622, '#c80014'], [962, 642, '#c00018'], [1010, 659, '#bc001c'], [1107, 684, '#ac0030'], [1193, 697, '#a00040'], [1286, 710, '#920048'], [1440, 745, '#700058']],
  [[907, 690, '#94001e'], [1010, 705, '#920024'], [1107, 724, '#880028'], [1193, 738, '#80002a'], [1286, 752, '#740024'], [1440, 772, '#5c0014']],
  [[907, 790, '#6a0018'], [1100, 795, '#6a0016'], [1286, 805, '#5c0010'], [1440, 820, '#480008']],
  [[907, 900, '#44000e'], [1100, 900, '#4a000c'], [1440, 900, '#420008']]
];

const rgb = hex => [1, 3, 5].map(i => parseInt(hex.slice(i, i + 2), 16));

function sample(row, x) {
  const last = row.length - 1;
  x = Math.min(Math.max(x, row[0][0]), row[last][0]);
  let i = 0;
  while (i < last - 1 && x > row[i + 1][0]) i++;
  const slope = k => {
    const a = row[Math.max(k - 1, 0)], b = row[Math.min(k + 1, last)];
    return (b[1] - a[1]) / (b[0] - a[0]);
  };
  const p = row[i], q = row[i + 1], w = q[0] - p[0], t = (x - p[0]) / w;
  const y = (2 * t ** 3 - 3 * t * t + 1) * p[1] + (t ** 3 - 2 * t * t + t) * w * slope(i)
    + (3 * t * t - 2 * t ** 3) * q[1] + (t ** 3 - t * t) * w * slope(i + 1);
  const c = rgb(p[2]), d = rgb(q[2]);
  return { y, colour: c.map((v, k) => v + (d[k] - v) * t) };
}

const canvas = document.getElementById('wallpaper');
const ctx = canvas.getContext('2d');
const { width, height } = canvas;
const from = -120, span = height - from;

function paintColumn(rows, x, alpha) {
  const fill = ctx.createLinearGradient(0, from, 0, height);
  let floor = from;
  for (const row of rows) {
    const s = sample(row, x);
    floor = Math.min(Math.max(s.y, floor), height);
    fill.addColorStop((floor - from) / span, `rgb(${s.colour.map(Math.round)})`);
  }
  ctx.globalAlpha = alpha;
  ctx.fillStyle = fill;
  ctx.fillRect(x, 0, 1, height);
}

for (let x = 0; x < width; x++) {
  const mix = Math.min(Math.max((x - 600) / 250, 0), 1);
  paintColumn(left, x, 1);
  if (mix > 0) paintColumn(right, x, mix);
}
```
